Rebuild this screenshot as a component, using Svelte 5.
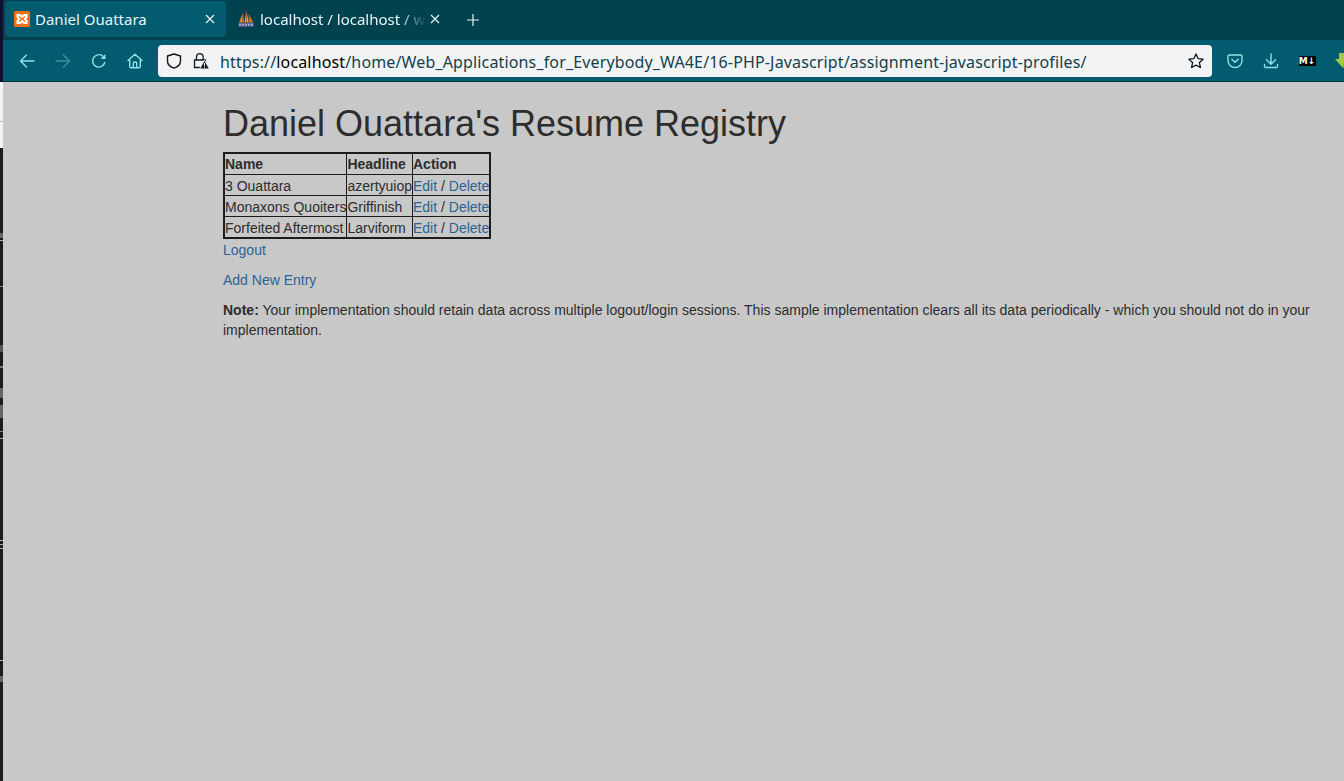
<script>
  const rows = [
    { name: '3 Ouattara', headline: 'azertyuiop' },
    { name: 'Monaxons Quoiters', headline: 'Griffinish' },
    { name: 'Forfeited Aftermost', headline: 'Larviform' }
  ];
</script>

<div class="screen">
  <div class="strip"></div>
  <div class="window">
    <div class="tabbar">
      <div class="tab active">
        <svg class="fav" viewBox="0 0 16 16" width="16" height="16">
          <rect width="16" height="16" rx="1.5" fill="#f0701c"/>
          <path d="M2.500 3h4L8 4.600 9.500 3h4v3.500L12 8l1.500 1.500V13h-4L8 11.400 6.500 13h-4V9.500L4 8 2.500 6.500z" fill="#fff"/>
          <path d="M4.800 5.200h1L8 7.300l2.200-2.100h1v1L9.300 8l1.900 1.800v1h-1L8 8.700l-2.200 2.100h-1v-1L6.700 8 4.800 6.200z" fill="#f0701c"/>
        </svg>
        <span class="tab-title">Daniel Ouattara</span>
        <svg class="close" viewBox="0 0 10 10" width="10" height="10"><path d="M1 1l8 8M9 1l-8 8" /></svg>
      </div>
      <div class="tab second">
        <svg class="fav" viewBox="0 0 16 16" width="16" height="16">
          <path d="M1 11.500 5 2l1 9.500z" fill="#ee8a22"/>
          <path d="M6.300 11.500 8.300 0l2.700 11.500z" fill="#f5a02a"/>
          <path d="M11.200 11.500 10.500 3 15.300 11.500z" fill="#e07a20"/>
          <path d="M4.800 3v8.500M8.300 1v10.500M11 5v6.500" stroke="#6e4420" stroke-width=".7"/>
          <rect x="0.500" y="11.800" width="15" height="4" fill="#5a5a96"/>
          <path d="M2 12.800v2M5 12.800v2M8 12.800v2M11 12.800v2M14 12.800v2" stroke="#d8d8ea" stroke-width="1.200"/>
        </svg>
        <span class="tab-title fade">localhost / localhost / wa4e | phpMyAdmin</span>
        <svg class="close" viewBox="0 0 10 10" width="10" height="10"><path d="M1 1l8 8M9 1l-8 8" /></svg>
      </div>
      <svg class="plus" viewBox="0 0 12 12" width="12" height="12"><path d="M6 0v12M0 6h12"/></svg>
    </div>

    <div class="toolbar">
      <div class="btn">
        <svg viewBox="0 0 16 16" width="16" height="16" class="ic"><path d="M15 8H1.500M7.500 2 1.500 8l6 6"/></svg>
      </div>
      <div class="btn dim">
        <svg viewBox="0 0 16 16" width="16" height="16" class="ic"><path d="M1 8h13.500M8.500 2l6 6-6 6"/></svg>
      </div>
      <div class="btn">
        <svg viewBox="0 0 16 16" width="16" height="16" class="ic"><path d="M13.800 9.500A6.200 6.200 0 1 1 11.500 2.900"/><path d="M14.500 1v5h-5z" class="solid"/></svg>
      </div>
      <div class="btn">
        <svg viewBox="0 0 16 16" width="16" height="16" class="ic"><path d="M1 7.500 8 1.200l7 6.300M2.700 6.500v7a1.300 1.300 0 0 0 1.300 1.300h8a1.300 1.300 0 0 0 1.300-1.300v-7M6.300 14.700V10a1 1 0 0 1 1-1h1.400a1 1 0 0 1 1 1v4.700"/></svg>
      </div>

      <div class="urlbar">
        <svg class="shield" viewBox="0 0 16 16" width="16" height="16"><path d="M8 1 14.500 3v5c0 3.500-3 6-6.500 7.200C4.500 14 1.500 11.500 1.500 8V3z"/></svg>
        <svg class="lock" viewBox="0 0 16 16" width="16" height="16">
          <path d="M3.500 7V4a3.300 3.300 0 0 1 6.600 0V7M1.500 7h11v7.500h-11z" class="lock-line"/>
          <path d="M11.500 7 16.500 16H6.500z" fill="#15191c" stroke="#f1f3f5" stroke-width="1"/>
          <path d="M11.500 10v3M11.500 13.800v1" stroke="#f1f3f5" stroke-width="1.100"/>
        </svg>
        <span class="url"><span class="host-pre">https://</span><span class="host">localhost</span><span class="path">/home/Web_Applications_for_Everybody_WA4E/16-PHP-Javascript/assignment-javascript-profiles/</span></span>
        <svg class="star" viewBox="0 0 16 16" width="16" height="16"><path d="M8 1l2.100 4.600 5 .6-3.700 3.400 1 4.900L8 12.100 3.600 14.500l1-4.900L.9 6.200l5-.6z"/></svg>
      </div>

      <div class="btn right">
        <svg viewBox="0 0 16 16" width="16" height="16" class="ic"><path d="M2.300 2h11.400A1.300 1.300 0 0 1 15 3.300V7.500a7 7 0 0 1-14 0V3.300A1.300 1.300 0 0 1 2.300 2z"/><path d="M4.800 6.200 8 9.300l3.200-3.100"/></svg>
      </div>
      <div class="btn">
        <svg viewBox="0 0 16 16" width="16" height="16" class="ic"><path d="M8 1v10M3.500 6.800 8 11.300l4.500-4.500M1.500 11.500v1.800A1.300 1.300 0 0 0 2.800 14.500h10.400a1.300 1.300 0 0 0 1.300-1.200v-1.800"/></svg>
      </div>
      <div class="btn"><span class="md">M↓</span></div>
      <div class="btn">
        <svg viewBox="0 0 16 16" width="16" height="16"><path d="M4 0h8v6h4l-8 9-8-9h4z" fill="#a2cb3a"/><path d="M8 15 16 6h-4V0H9v8z" fill="#6ea81f"/></svg>
      </div>
    </div>

    <main class="page">
      <h1>Daniel Ouattara's Resume Registry</h1>
      <table>
        <thead>
          <tr><th>Name</th><th>Headline</th><th>Action</th></tr>
        </thead>
        <tbody>
          {#each rows as row}
            <tr>
              <td>{row.name}</td>
              <td>{row.headline}</td>
              <td><a href="#edit">Edit</a> / <a href="#delete">Delete</a></td>
            </tr>
          {/each}
        </tbody>
      </table>
      <p class="logout"><a href="#logout">Logout</a></p>
      <p><a href="#add">Add New Entry</a></p>
      <p class="note"><strong>Note:</strong> Your implementation should retain data across multiple logout/login sessions. This sample implementation clears all its data periodically - which you should not do in your implementation.</p>
    </main>
  </div>
</div>

<style>
  :global(body) {
    margin: 0;
    overflow: hidden;
  }
  .screen {
    display: flex;
    width: 1344px;
    height: 781px;
    overflow: hidden;
    background: #c8c8c8;
  }
  .strip {
    flex: 0 0 3px;
    background: linear-gradient(
      to bottom,
      #0a1230 0 82px,
      #f4f4f4 82px 121px,
      #b8b8b8 121px 122px,
      #f4f4f4 122px 148px,
      #1c1c1c 148px 233px,
      #666 233px 238px,
      #1c1c1c 238px 240px,
      #aaa 240px 241px,
      #1c1c1c 241px 286px,
      #888 286px 287px,
      #1c1c1c 287px 345px,
      #555 345px 352px,
      #1c1c1c 352px 366px,
      #777 366px 368px,
      #1c1c1c 368px 388px,
      #666 388px 398px,
      #1c1c1c 398px 405px,
      #666 405px 418px,
      #1c1c1c 418px 431px,
      #888 431px 432px,
      #1c1c1c 432px 438px,
      #aaa 438px 439px,
      #1c1c1c 439px 540px,
      #aaa 540px 541px,
      #1c1c1c 541px 544px,
      #aaa 544px 545px,
      #1c1c1c 545px 548px,
      #aaa 548px 549px,
      #1c1c1c 549px 660px,
      #aaa 660px 661px,
      #1c1c1c 661px 676px,
      #666 676px 682px,
      #1c1c1c 682px
    );
  }
  .window {
    flex: 1;
    min-width: 0;
    display: flex;
    flex-direction: column;
  }
  .tabbar {
    height: 40px;
    box-sizing: border-box;
    display: flex;
    align-items: flex-start;
    padding: 1px 0 0 2px;
    background: #00434f;
    font-family: "Noto Sans", sans-serif;
    color: #e8f4f6;
    font-size: 15px;
  }
  .tab {
    width: 221px;
    height: 36px;
    box-sizing: border-box;
    display: flex;
    align-items: center;
    padding: 0 11px 0 9px;
    border-radius: 4px;
  }
  .tab.second {
    padding-left: 8px;
    margin-left: 4px;
  }
  .tab.active {
    background: #025b6e;
  }
  .fav {
    flex: none;
    margin-right: 6px;
  }
  .tab.active .fav {
    margin-right: 5px;
  }
  .tab-title {
    flex: 1;
    min-width: 0;
    white-space: nowrap;
    overflow: hidden;
  }
  .fade {
    mask-image: linear-gradient(to right, #000 84%, transparent 100%);
    -webkit-mask-image: linear-gradient(to right, #000 84%, transparent 100%);
  }
  .close {
    flex: none;
    margin-left: 4px;
  }
  .close path,
  .plus path {
    stroke: #e8f4f6;
    stroke-width: 1.200;
    fill: none;
  }
  .plus {
    margin: 13px 0 0 16px;
    flex: none;
  }
  .toolbar {
    height: 42px;
    box-sizing: border-box;
    display: flex;
    align-items: center;
    padding: 1px 0 0 6px;
    background: #025b6e;
    border-bottom: 1px solid #03323d;
    overflow: hidden;
  }
  .btn {
    flex: 0 0 36px;
    height: 32px;
    display: flex;
    align-items: center;
    justify-content: center;
  }
  .btn.dim {
    opacity: 0.4;
  }
  .btn.right {
    margin-left: 5px;
  }
  .ic path {
    fill: none;
    stroke: #8fe3e6;
    stroke-width: 1.400;
    stroke-linecap: round;
    stroke-linejoin: round;
  }
  .ic path.solid {
    fill: #8fe3e6;
    stroke: none;
  }
  .md {
    background: #000;
    color: #fff;
    font: 700 9px/10px "DejaVu Sans", sans-serif;
    width: 17px;
    height: 10px;
    border-radius: 1px;
    text-align: center;
    white-space: nowrap;
    overflow: hidden;
  }
  .urlbar {
    flex: 0 0 1054px;
    height: 32px;
    box-sizing: border-box;
    margin-left: 5px;
    display: flex;
    align-items: center;
    padding: 0 8px;
    background: #f1f3f5;
    border-radius: 4px;
    font-family: "Noto Sans", sans-serif;
  }
  .shield {
    flex: none;
  }
  .shield path {
    fill: none;
    stroke: #15191c;
    stroke-width: 1.400;
    stroke-linejoin: round;
  }
  .lock {
    flex: none;
    margin-left: 11px;
  }
  .lock-line {
    fill: none;
    stroke: #15191c;
    stroke-width: 1.300;
  }
  .url {
    flex: 1;
    min-width: 0;
    margin-left: 11px;
    padding-top: 1px;
    font-size: 16px;
    letter-spacing: 0.147px;
    white-space: nowrap;
    color: #153f4c;
  }
  .host {
    color: #000;
  }
  .star {
    flex: none;
  }
  .star path {
    fill: none;
    stroke: #15191c;
    stroke-width: 1.300;
    stroke-linejoin: round;
  }
  .page {
    flex: 1;
    padding: 0 15px 0 220px;
    background: #c8c8c8;
    color: #2d2d2d;
    font: 14px/20px "Liberation Sans", Arial, sans-serif;
  }
  h1 {
    margin: 22px 0 8px;
    font-size: 36px;
    font-weight: 400;
    line-height: 40px;
  }
  table {
    border-collapse: collapse;
    border: 2px solid #1c1c1c;
  }
  th,
  td {
    border: 1px solid #1c1c1c;
    padding: 0;
    text-align: left;
    font-weight: 400;
  }
  th {
    font-weight: 700;
  }
  td {
    padding-top: 2px;
    line-height: 18px;
  }
  a {
    color: #2a6496;
    text-decoration: none;
  }
  p {
    margin: 0 0 10px;
  }
  .logout {
    margin-top: 1px;
  }
  .note {
    letter-spacing: 0.008px;
  }
  strong {
    font-weight: 700;
  }
</style>
